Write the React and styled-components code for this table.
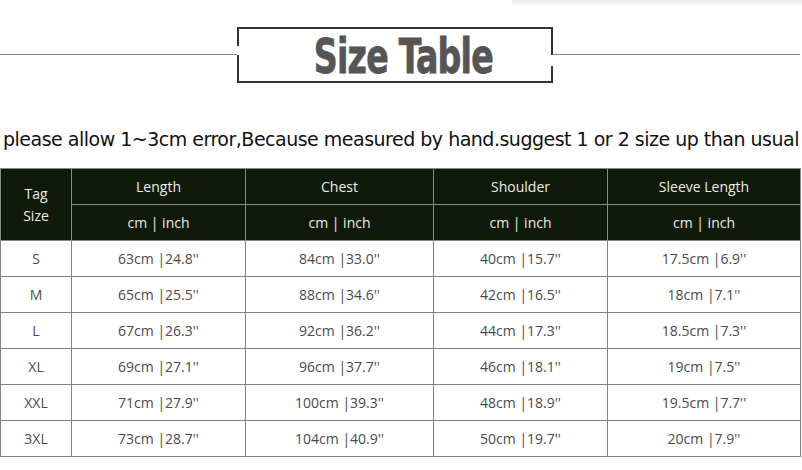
import React from "react";
import styled, { createGlobalStyle } from "styled-components";

const Global = createGlobalStyle`
  html, body { margin: 0; padding: 0; background: #fff; }
  body { width: 802px; overflow: hidden; }
`;

const Page = styled.div`
  width: 802px;
  height: 470px;
  display: flex;
  flex-direction: column;
  background: #fff;
`;

const TopBand = styled.div`
  height: 6px;
  margin-left: 512px;
  background: linear-gradient(to bottom, #ececec, #fafafa 80%, #fff);
`;

const TitleRow = styled.div`
  margin-top: 21px;
  height: 56px;
  display: flex;
  align-items: center;
  padding-right: 2px;
`;

const Rule = styled.div`
  flex: ${(p) => (p.$width ? `0 0 ${p.$width}px` : "1 1 auto")};
  height: 1px;
  background: #8a8a8a;
  align-self: center;
  margin-top: -1px;
`;

const TitleBox = styled.div`
  width: 316px;
  height: 56px;
  flex: none;
  box-sizing: border-box;
  border-top: 2px solid #333;
  border-bottom: 2px solid #333;
  background:
    linear-gradient(to bottom, #333 0 17px, transparent 17px 26px, #333 26px) left top / 2px 100% no-repeat,
    linear-gradient(to bottom, #333 0 26px, transparent 26px 37px, #333 37px) right top / 2px 100% no-repeat;
  display: flex;
  align-items: center;
  justify-content: center;
  padding-left: 16px;
`;

const TitleText = styled.span`
  font-family: "DejaVu Sans Condensed", "DejaVu Sans", sans-serif;
  font-weight: bold;
  font-size: 48px;
  line-height: 1;
  color: #555;
  letter-spacing: -1px;
  display: inline-block;
  transform: scaleX(0.77);
  -webkit-text-stroke: 0.8px #555;
  margin-top: 2px;
`;

const Notice = styled.p`
  margin: 44px 0 17px 0;
  height: 24px;
  font-family: "DejaVu Sans", sans-serif;
  font-size: 19px;
  letter-spacing: -0.5px;
  line-height: 24px;
  color: #111;
  text-align: center;
  white-space: nowrap;
`;

const SizeTable = styled.table`
  width: 800px;
  table-layout: fixed;
  border-collapse: collapse;
  font-family: "Open Sans", sans-serif;
  font-size: 14px;
`;

const HeadCell = styled.th`
  background: #0f1a0b;
  color: #ecece4;
  font-weight: normal;
  border: 1px solid #8a8a82;
  height: 35px;
  padding: 0;
  line-height: 22px;
  text-align: center;
`;

const Cell = styled.td`
  color: #4a4a4a;
  border: 1px solid #808080;
  height: 35px;
  padding: 0;
  text-align: center;
  white-space: nowrap;
`;

const columns = ["Length", "Chest", "Shoulder", "Sleeve Length"];
const widths = [71, 174, 188, 174, 193];

const rows = [
  ["S", "63cm |24.8''", "84cm |33.0''", "40cm |15.7''", "17.5cm |6.9''"],
  ["M", "65cm |25.5''", "88cm |34.6''", "42cm |16.5''", "18cm |7.1''"],
  ["L", "67cm |26.3''", "92cm |36.2''", "44cm |17.3''", "18.5cm |7.3''"],
  ["XL", "69cm |27.1''", "96cm |37.7''", "46cm |18.1''", "19cm |7.5''"],
  ["XXL", "71cm |27.9''", "100cm |39.3''", "48cm |18.9''", "19.5cm |7.7''"],
  ["3XL", "73cm |28.7''", "104cm |40.9''", "50cm |19.7''", "20cm |7.9''"],
];

export default function App() {
  return (
    <Page>
      <Global />
      <TopBand />
      <TitleRow>
        <Rule $width={237} />
        <TitleBox>
          <TitleText>Size Table</TitleText>
        </TitleBox>
        <Rule />
      </TitleRow>
      <Notice>
        please allow 1~3cm error,Because measured by hand.suggest 1 or 2 size up than usual
      </Notice>
      <SizeTable>
        <colgroup>
          {widths.map((w, i) => (
            <col key={i} style={{ width: w }} />
          ))}
        </colgroup>
        <thead>
          <tr>
            <HeadCell rowSpan={2}>
              Tag
              <br />
              Size
            </HeadCell>
            {columns.map((c) => (
              <HeadCell key={c}>{c}</HeadCell>
            ))}
          </tr>
          <tr>
            {columns.map((c) => (
              <HeadCell key={c}>cm | inch</HeadCell>
            ))}
          </tr>
        </thead>
        <tbody>
          {rows.map((r) => (
            <tr key={r[0]}>
              {r.map((v, i) => (
                <Cell key={i}>{v}</Cell>
              ))}
            </tr>
          ))}
        </tbody>
      </SizeTable>
    </Page>
  );
}
